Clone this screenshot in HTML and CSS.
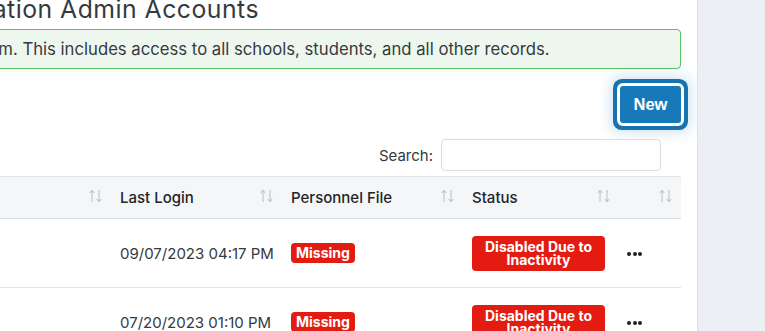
FILE: index.html
```html
<!DOCTYPE html>
<html lang="en">
<head>
    <meta charset="UTF-8">
    <meta name="viewport" content="width=device-width, initial-scale=1.0">
    <title>Organization Admin Accounts</title>
    <link rel="stylesheet" href="styles.css">
</head>
<body>
    <div class="main">
        <div class="page">
            <h2 class="titulo">Organization Admin Accounts</h2>

            <div class="alerta">Admins have full access to the system. This includes access to all schools, students, and all other records.</div>

            <div class="barra">
                <button class="btn-nuevo">New</button>
            </div>

            <div class="filtro">
                <label for="buscar">Search:</label>
                <input type="search" id="buscar">
            </div>

            <table class="tabla">
                <colgroup>
                    <col class="c-name">
                    <col class="c-email">
                    <col class="c-login">
                    <col class="c-file">
                    <col class="c-status">
                    <col class="c-menu">
                </colgroup>
                <thead>
                    <tr>
                        <th>Name</th>
                        <th>Email</th>
                        <th>Last Login</th>
                        <th>Personnel File</th>
                        <th>Status</th>
                        <th></th>
                    </tr>
                </thead>
                <tbody>
                    <tr>
                        <td>Admin One</td>
                        <td>aone@ps.org</td>
                        <td>09/07/2023 04:17 PM</td>
                        <td><span class="badge">Missing</span></td>
                        <td><span class="badge estado">Disabled Due to Inactivity</span></td>
                        <td><span class="puntos"><i></i><i></i><i></i></span></td>
                    </tr>
                    <tr>
                        <td>Admin Two</td>
                        <td>atwo@ps.org</td>
                        <td>07/20/2023 01:10 PM</td>
                        <td><span class="badge">Missing</span></td>
                        <td><span class="badge estado">Disabled Due to Inactivity</span></td>
                        <td><span class="puntos"><i></i><i></i><i></i></span></td>
                    </tr>
                </tbody>
            </table>
        </div>
    </div>
    <div class="lateral"></div>
</body>
</html>
```
FILE: styles.css
```css
body {
    margin: 0;
    height: 331px;
    display: flex;
    overflow: hidden;
    font-family: Inter, sans-serif;
    color: #343a40;
    background: #ffffff;
}

.main {
    width: 697px;
    flex: 0 0 697px;
    overflow: hidden;
}

/* la pagina esta desplazada a la izquierda */
.page {
    margin-left: -330px;
    padding: 0 16px;
}

.titulo {
    margin: -5px 0 0 212px;
    font-size: 24.75px;
    font-weight: 400;
    letter-spacing: 0.5px;
    line-height: 29px;
    color: #343a40;
    white-space: nowrap;
}

.alerta {
    margin-top: 5px;
    height: 38px;
    padding: 0 0 0 24px;
    display: flex;
    align-items: center;
    border: 1px solid #5cbf62;
    border-radius: 4px;
    background: #edf7ee;
    font-size: 16.7px;
    color: #363a3f;
    white-space: nowrap;
}

.barra {
    display: flex;
    justify-content: flex-end;
    margin-top: 17px;
}

.btn-nuevo {
    width: 61px;
    height: 37px;
    border: none;
    border-radius: 3px;
    background: #1779b7;
    color: #ffffff;
    font-family: "Liberation Sans", Arial, sans-serif;
    font-weight: 700;
    font-size: 16.5px;
    box-shadow: 0 0 0 3px #ffffff, 0 0 0 7px #1574b0, 0 0 14px 9px rgba(23, 121, 183, 0.22);
}

.filtro {
    display: flex;
    justify-content: flex-end;
    align-items: center;
    gap: 8px;
    margin: 16px 20px 0 0;
    font-size: 15px;
}

.filtro input {
    width: 220px;
    height: 32px;
    box-sizing: border-box;
    border: 1px solid #d6dde4;
    border-radius: 4px;
}

.tabla {
    width: 100%;
    margin-top: 5px;
    table-layout: fixed;
    border-collapse: collapse;
    font-size: 15px;
}

.c-name { width: 200px; }
.c-email { width: 222px; }
.c-login { width: 171px; }
.c-file { width: 181px; }
.c-status { width: 156px; }
.c-menu { width: 65px; }

.tabla th {
    position: relative;
    height: 41px;
    padding: 0 12px;
    text-align: left;
    font-weight: 500;
    color: #212529;
    background: #f5f6f8;
    border-top: 1px solid #dfe3e8;
    border-bottom: 1px solid #d5dbe2;
    white-space: nowrap;
}

/* flechas de orden */
.tabla th::after {
    content: "";
    position: absolute;
    right: 6px;
    top: 12px;
    width: 13px;
    height: 14px;
    background: url("data:image/svg+xml;utf8,<svg xmlns='http://www.w3.org/2000/svg' width='13' height='14' viewBox='0 0 13 14'><g fill='none' stroke='%23c3c7cc' stroke-width='1.2'><path d='M3 13V1.5M0.8 3.8L3 1.4 5.2 3.8'/><path d='M10 1v11.5M7.8 10.2L10 12.6 12.2 10.2'/></g></svg>") no-repeat;
}

.tabla th:last-child::after {
    right: 9px;
}

.tabla td {
    height: 68px;
    padding: 0 12px;
    border-bottom: 1px solid #dfe3e8;
    white-space: nowrap;
    color: #343a40;
}

.badge {
    display: inline-block;
    padding: 0 5px;
    height: 20px;
    line-height: 20px;
    border-radius: 4px;
    background: #e31b11;
    color: #ffffff;
    font-size: 14px;
    font-weight: 700;
    vertical-align: middle;
}

.badge.estado {
    width: 133px;
    height: 35px;
    box-sizing: border-box;
    padding: 4px 6px 0;
    line-height: 13.5px;
    white-space: normal;
    text-align: center;
}

.puntos {
    display: inline-flex;
    gap: 1.5px;
    margin-left: -1px;
    vertical-align: middle;
}

.puntos i {
    width: 4px;
    height: 4px;
    border-radius: 50%;
    background: #1d2227;
}

.lateral {
    flex: 1;
    background: #eceff4;
    border-left: 1px solid #dde2e8;
}
```
